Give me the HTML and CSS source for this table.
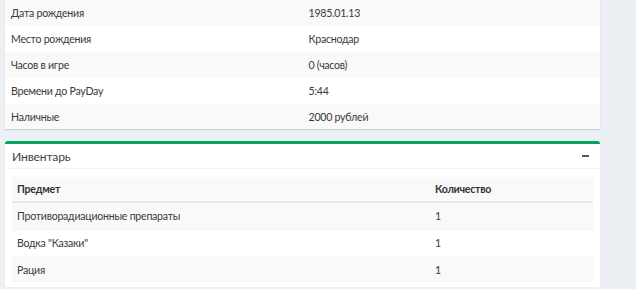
FILE: index.html
```html
<!DOCTYPE html>
<html>
<head>
<meta charset="utf-8">
<link rel="stylesheet" href="styles.css">
</head>
<body>
<div class="page">
  <div class="card">
    <table class="info">
      <tr><td>Дата рождения</td><td>1985.01.13</td></tr>
      <tr><td>Место рождения</td><td>Краснодар</td></tr>
      <tr><td>Часов в игре</td><td>0 (часов)</td></tr>
      <tr><td>Времени до PayDay</td><td>5:44</td></tr>
      <tr><td>Наличные</td><td>2000 рублей</td></tr>
    </table>
  </div>
  <div class="card box">
    <div class="box-header">
      <span class="box-title">Инвентарь</span>
      <span class="minus"></span>
    </div>
    <div class="box-body">
      <table class="inv">
        <thead>
          <tr><th class="c1">Предмет</th><th>Количество</th></tr>
        </thead>
        <tbody>
          <tr><td>Противорадиационные препараты</td><td>1</td></tr>
          <tr><td>Водка "Казаки"</td><td>1</td></tr>
          <tr><td>Рация</td><td>1</td></tr>
        </tbody>
      </table>
    </div>
  </div>
</div>
</body>
</html>
```
FILE: styles.css
```css
html, body {
  margin: 0;
  padding: 0;
  background: #ecf0f5;
  font-family: "Lato", "Open Sans", sans-serif;
  font-size: 10.6px;
  letter-spacing: -0.25px;
  color: #333;
}
.page {
  width: 595px;
  padding-left: 5px;
}
.card {
  background: #fff;
  box-shadow: 0 1px 1px rgba(0,0,0,0.12);
}
table {
  width: 100%;
  border-collapse: collapse;
}
.info td {
  width: 50%;
  height: 26px;
  padding: 0 6px;
  vertical-align: middle;
  color: #3a3a3a;
}
.info tr:nth-child(odd) td { background: #f9f9f9; }
.info tr:last-child td { height: 25px; }
.box {
  margin-top: 12px;
  border-top: 3px solid #00a65a;
  border-radius: 3px 3px 0 0;
  padding-bottom: 4px;
}
.box-header {
  height: 24px;
  display: flex;
  align-items: center;
  justify-content: space-between;
  padding: 0 11px 0 7px;
  border-bottom: 1px solid #f4f4f4;
}
.box-title {
  font-size: 12.2px;
  letter-spacing: -0.2px;
  color: #444;
}
.minus {
  width: 7px;
  height: 2px;
  background: #555;
}
.box-body {
  padding: 8px 7px 0 7px;
}
.inv th, .inv td {
  padding: 0 5px;
  text-align: left;
  vertical-align: middle;
}
.inv th {
  height: 24px;
  font-weight: bold;
  color: #333;
  background: #f9f9f9;
  border-bottom: 2px solid #eaeaea;
}
.inv th.c1 { width: 408px; }
.inv td { height: 26px; border-top: 1px solid #f4f4f4; color: #3a3a3a; }
.inv tbody tr:first-child td { border-top: 0; height: 26px; }
.inv tbody tr:nth-child(odd) td { background: #f9f9f9; }
```
